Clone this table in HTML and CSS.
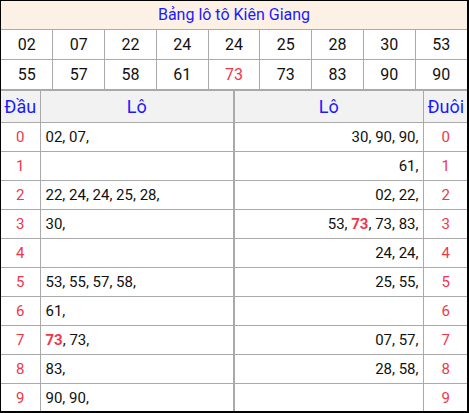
FILE: index.html
```html
<!DOCTYPE html>
<html lang="vi">
<head>
<meta charset="utf-8">
<link rel="stylesheet" href="styles.css">
</head>
<body>
<div class="box">
  <table class="top">
    <tr><td class="title" colspan="9">Bảng lô tô Kiên Giang</td></tr>
    <tr><td>02</td><td>07</td><td>22</td><td>24</td><td>24</td><td>25</td><td>28</td><td>30</td><td>53</td></tr>
    <tr><td>55</td><td>57</td><td>58</td><td>61</td><td class="red">73</td><td>73</td><td>83</td><td>90</td><td>90</td></tr>
  </table>
  <table class="lt">
    <colgroup><col class="c1"><col class="c2"><col class="c3"><col class="c4"></colgroup>
    <tr class="head"><th>Đầu</th><th class="mid">Lô</th><th class="mid2">Lô</th><th>Đuôi</th></tr>
    <tr><td class="d">0</td><td class="l">02, 07,</td><td class="r">30, 90, 90,</td><td class="d">0</td></tr>
    <tr><td class="d">1</td><td class="l"></td><td class="r">61,</td><td class="d">1</td></tr>
    <tr><td class="d">2</td><td class="l">22, 24, 24, 25, 28,</td><td class="r">02, 22,</td><td class="d">2</td></tr>
    <tr><td class="d">3</td><td class="l">30,</td><td class="r">53, <b class="hl">73</b>, 73, 83,</td><td class="d">3</td></tr>
    <tr><td class="d">4</td><td class="l"></td><td class="r">24, 24,</td><td class="d">4</td></tr>
    <tr><td class="d">5</td><td class="l">53, 55, 57, 58,</td><td class="r">25, 55,</td><td class="d">5</td></tr>
    <tr><td class="d">6</td><td class="l">61,</td><td class="r"></td><td class="d">6</td></tr>
    <tr><td class="d">7</td><td class="l"><b class="hl">73</b>, 73,</td><td class="r">07, 57,</td><td class="d">7</td></tr>
    <tr><td class="d">8</td><td class="l">83,</td><td class="r">28, 58,</td><td class="d">8</td></tr>
    <tr><td class="d">9</td><td class="l">90, 90,</td><td class="r"></td><td class="d">9</td></tr>
  </table>
</div>
</body>
</html>
```
FILE: styles.css
```css
html, body {
  margin: 0;
  padding: 0;
  background: #fff;
}
body {
  font-family: Roboto, "Liberation Sans", sans-serif;
  color: #111;
}
.box {
  width: 469px;
  height: 413px;
  box-sizing: border-box;
  border: 1px solid #000;
  border-right-width: 2px;
  border-bottom-width: 2px;
  overflow: hidden;
}
table {
  width: 100%;
  border-collapse: collapse;
  table-layout: fixed;
}
.top td {
  border: 1px solid #aaa;
  height: 29px;
  padding: 0;
  text-align: center;
  font-size: 16px;
  line-height: 28px;
}
.top tr:first-child td { border-top: none; }
.top tr td:first-child { border-left: none; }
.top tr td:last-child { border-right: none; }
.top tr:last-child td { border-bottom: 1px solid #aaa; }
.top td.title {
  background: #fdf1e6;
  color: #1a1aff;
  font-size: 16px;
  height: 28px;
}
.top td.red { color: #f0364a; }
.lt {
  border-top: 1px solid #aaa;
}
.c1 { width: 39px; }
.c2 { width: 194px; }
.c3 { width: 189px; }
.c4 { width: 45px; }
.lt th, .lt td {
  border: 1px solid #aaa;
  padding: 0;
  font-weight: normal;
}
.lt tr td:first-child, .lt tr th:first-child { border-left: none; }
.lt tr td:last-child, .lt tr th:last-child { border-right: none; }
.lt tr:last-child td { border-bottom: none; }
.lt th {
  background: #f2f2f2;
  color: #1a1aff;
  font-size: 18px;
  height: 31px;
  text-align: center;
}
.lt th.mid2, .lt td.r { border-left: 2px solid #aaa; }
.lt td {
  height: 28px;
  font-size: 15px;
}
.lt td.d {
  color: #f0364a;
  text-align: center;
}
.lt td.l {
  text-align: left;
  padding-left: 5px;
}
.lt td.r {
  text-align: right;
  padding-right: 4px;
}
.hl {
  color: #f0364a;
  font-weight: bold;
}
```
